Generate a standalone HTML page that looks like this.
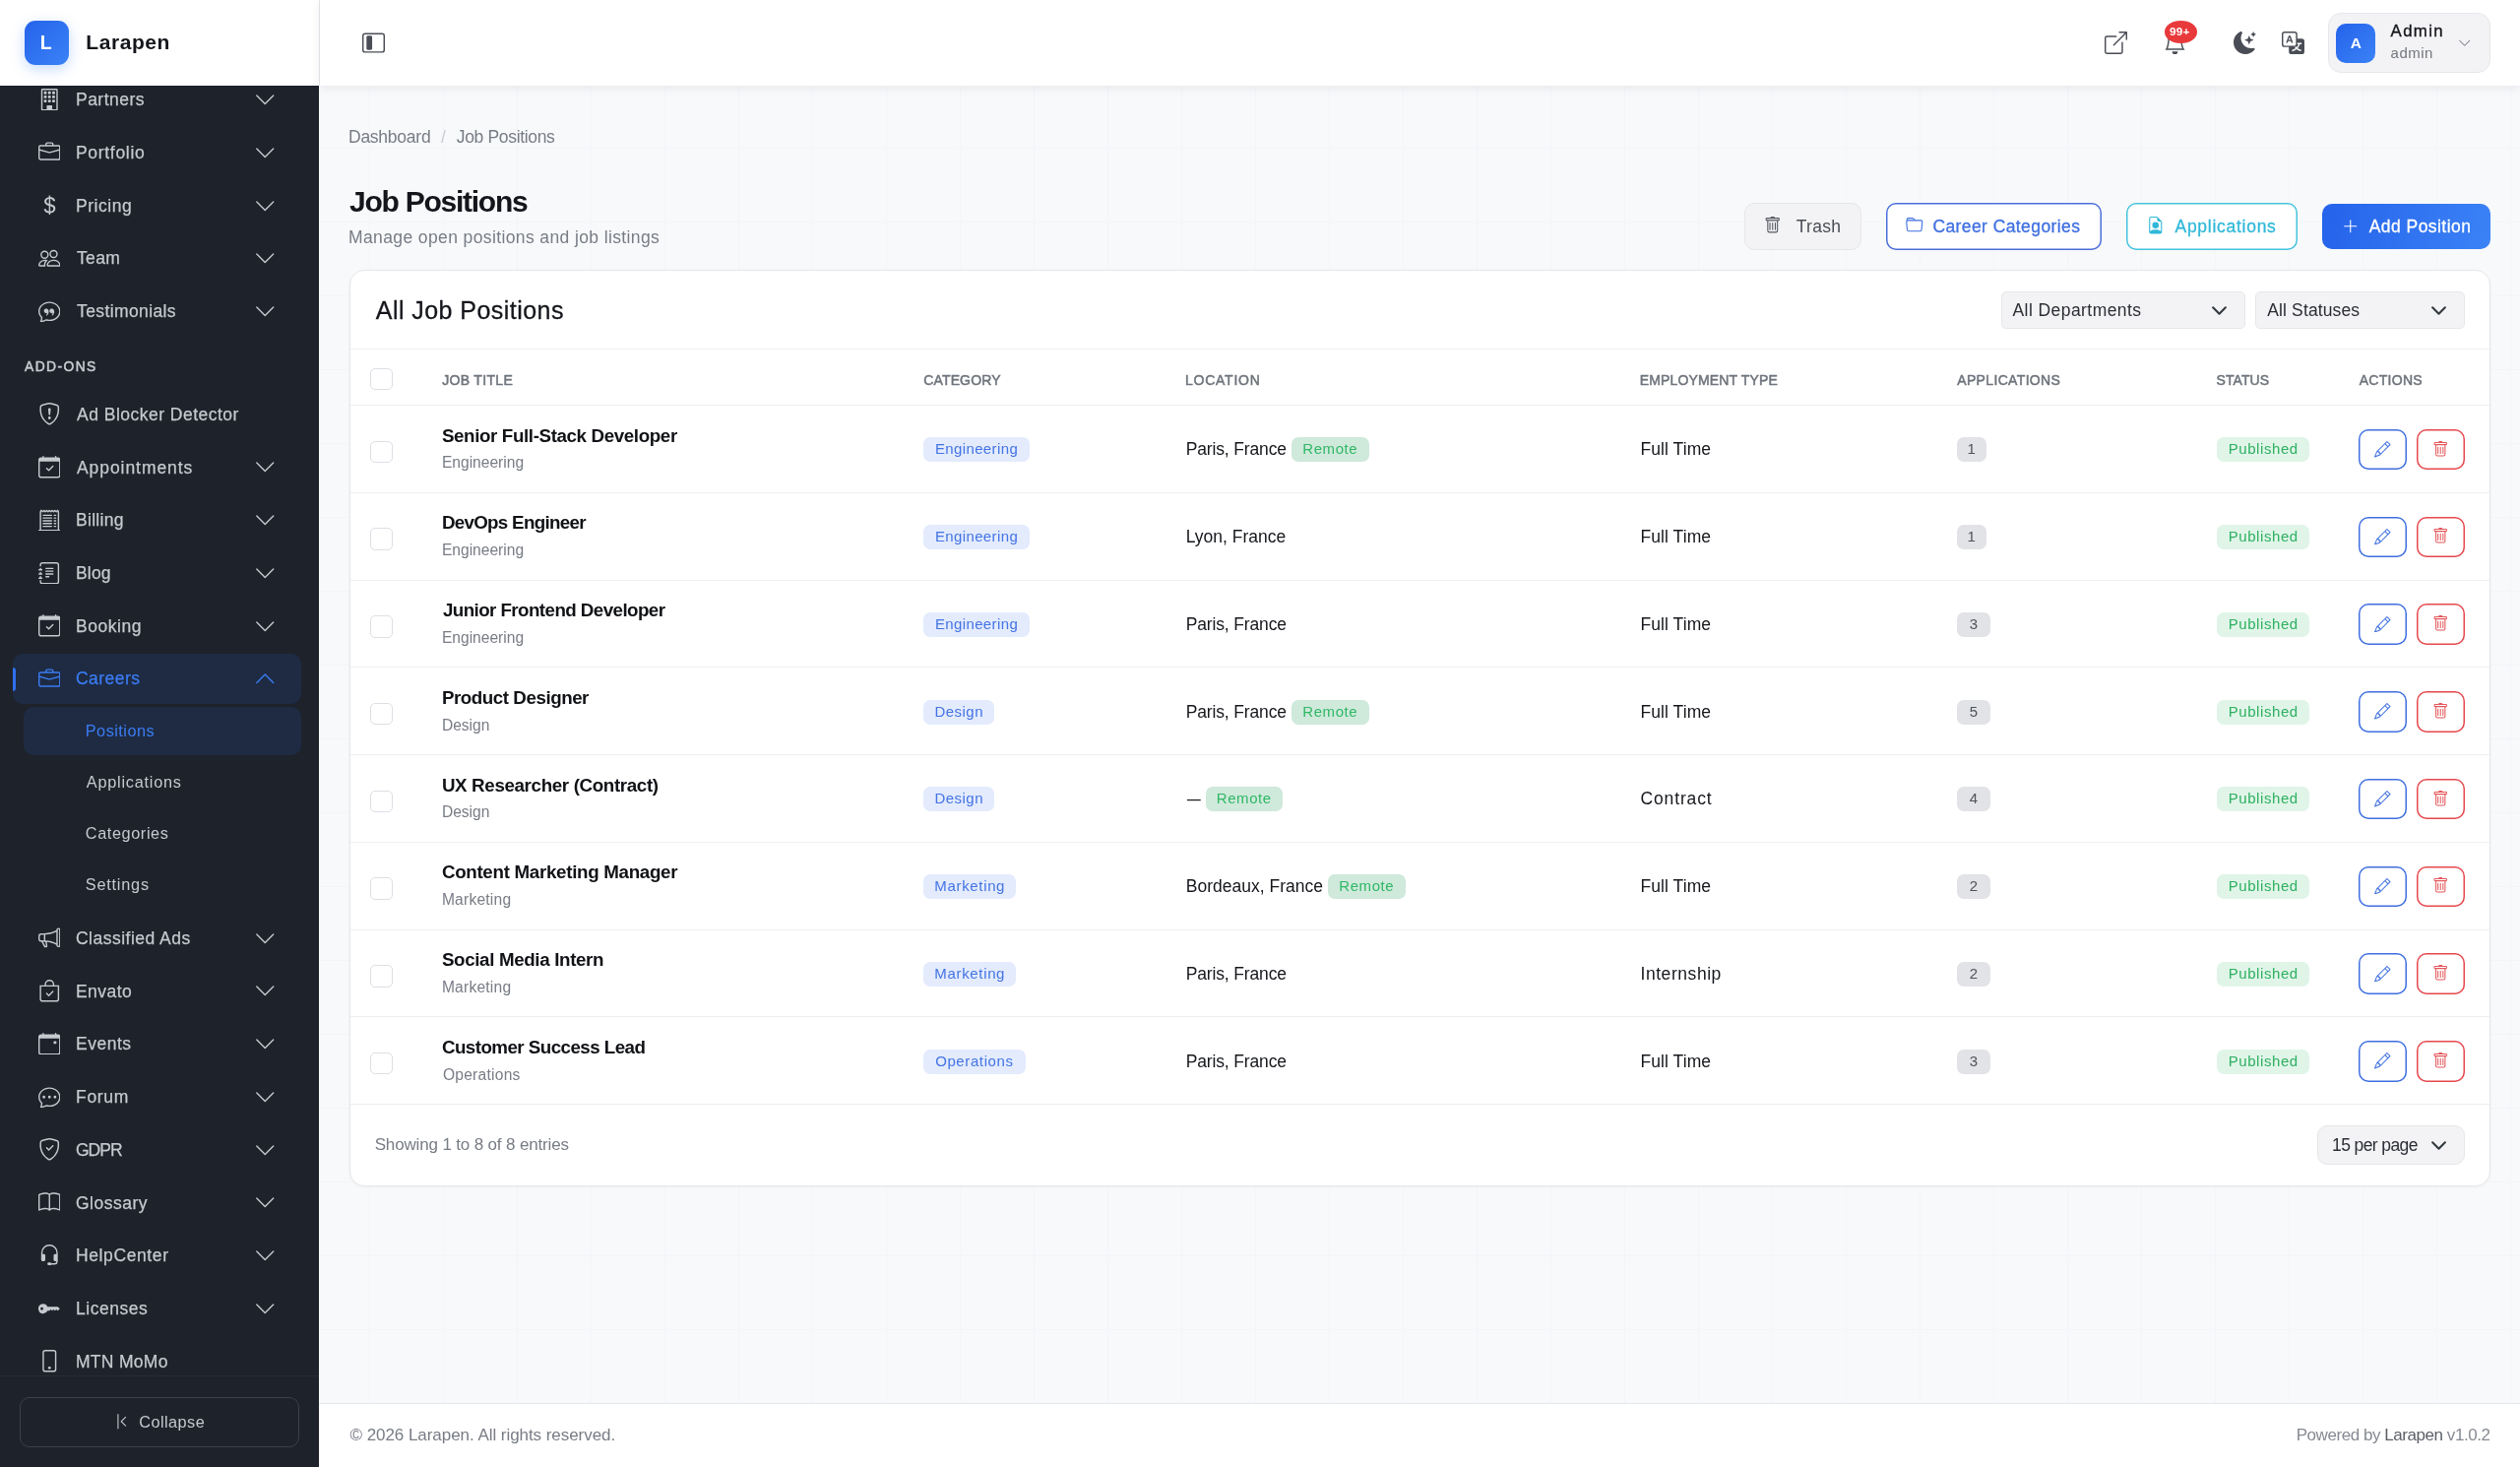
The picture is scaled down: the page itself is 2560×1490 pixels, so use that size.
<!DOCTYPE html><html lang="en"><head><meta charset="utf-8"><title>Job Positions - Larapen</title><style>
*{box-sizing:border-box}
html,body{margin:0;padding:0}
body{width:2560px;height:1490px;overflow:hidden;position:relative;font-family:"Liberation Sans",Arial,sans-serif;color:#15171c;
 background-color:#f8f9fb;
 background-image:linear-gradient(to right,#f4f5f8 1px,transparent 1px),linear-gradient(to bottom,#f4f5f8 1px,transparent 1px);
 background-size:75px 75px;background-position:0 0}
#app{position:absolute;left:0;top:0;width:2560px;height:1490px;will-change:transform}
.t{position:absolute;white-space:nowrap}
.i{position:absolute;display:block}
.abs{position:absolute}
#sidebar{position:absolute;left:0;top:0;width:324px;height:1490px;background:#1e222b;overflow:hidden;color:#c6c9ce}
#brand{position:absolute;left:0;top:0;width:325px;height:87px;background:#fff;border-right:1px solid #e6e8ec}
#topbar{position:absolute;left:325px;top:0;width:2235px;height:87px;background:#fff;box-shadow:0 2px 10px rgba(20,25,40,.08)}
#footer{position:absolute;left:324px;top:1425px;width:2236px;height:65px;background:#fff;border-top:1px solid #e6e8ec}
#card{position:absolute;left:355px;top:274px;width:2175px;height:931px;background:#fff;border:1px solid #e4e6ea;border-radius:15px;box-shadow:0 1px 3px rgba(20,25,40,.04)}
.hr{position:absolute;left:356px;width:2173px;height:1px;background:#eeeff2}
.logo{position:absolute;left:25px;top:21px;width:45px;height:45px;border-radius:11px;background:linear-gradient(135deg,#2563eb,#3b82f6);box-shadow:0 4px 14px rgba(59,130,246,.28)}
.cb{position:absolute;width:22.5px;height:22.5px;border:1px solid #dcdfe4;border-radius:5px;background:#fff}
.bd{position:absolute;height:25px;border-radius:7px;font-size:15px;line-height:24px;padding:0;text-align:center}
.b-blue{background:#e3ebfd;color:#4474e3}
.b-green{background:#cfe9db;color:#30b866}
.b-pub{background:#e0f5e8;color:#2fb062}
.b-gray{background:#e2e3e6;color:#4f535a}
.btn{position:absolute;border-radius:10px}
.act{position:absolute;width:49px;height:41.5px;border-radius:10px;background:#fff}
.act.e{box-shadow:inset 0 0 0 1.5px #3f6fe0}
.act.d{box-shadow:inset 0 0 0 1.5px #e5484d}
.sel{position:absolute;background:#f3f3f5;border:1px solid #e6e7ea;border-radius:5px}
</style></head><body><div id="app">
<aside id="sidebar">
<svg class="i" style="left:38.75px;top:89.65px;width:22.5px;height:22.5px;" viewBox="0 0 16 16" fill="currentColor"><path d="M4 2.500a.5.5 0 0 1 .5-.5h1a.5.5 0 0 1 .5.5v1a.5.5 0 0 1-.5.5h-1a.5.5 0 0 1-.5-.5zm3 0a.5.5 0 0 1 .5-.5h1a.5.5 0 0 1 .5.5v1a.5.5 0 0 1-.5.5h-1a.5.5 0 0 1-.5-.5zm3.500-.5a.5.5 0 0 0-.5.5v1a.5.5 0 0 0 .5.5h1a.5.5 0 0 0 .5-.5v-1a.5.5 0 0 0-.5-.5zM4 5.500a.5.5 0 0 1 .5-.5h1a.5.5 0 0 1 .5.5v1a.5.5 0 0 1-.5.5h-1a.5.5 0 0 1-.5-.5zM7.500 5a.5.5 0 0 0-.5.5v1a.5.5 0 0 0 .5.5h1a.5.5 0 0 0 .5-.5v-1a.5.5 0 0 0-.5-.5zm2.500.5a.5.5 0 0 1 .5-.5h1a.5.5 0 0 1 .5.5v1a.5.5 0 0 1-.5.5h-1a.5.5 0 0 1-.5-.5zM4.500 8a.5.5 0 0 0-.5.5v1a.5.5 0 0 0 .5.5h1a.5.5 0 0 0 .5-.5v-1a.5.5 0 0 0-.5-.5zm2.500.5a.5.5 0 0 1 .5-.5h1a.5.5 0 0 1 .5.5v1a.5.5 0 0 1-.5.5h-1a.5.5 0 0 1-.5-.5zm3.500-.5a.5.5 0 0 0-.5.5v1a.5.5 0 0 0 .5.5h1a.5.5 0 0 0 .5-.5v-1a.5.5 0 0 0-.5-.5z"/><path d="M2 1a1 1 0 0 1 1-1h10a1 1 0 0 1 1 1v14a1 1 0 0 1-1 1H3a1 1 0 0 1-1-1zm11 0H3v14h3v-2.500a.5.5 0 0 1 .5-.5h3a.5.5 0 0 1 .5.5V15h3z"/></svg>
<span class="t" style="left:77.00px;top:91.24px;font-size:17.5px;line-height:21.0px;letter-spacing:0.471px;-webkit-text-stroke:0.25px #c6c9ce;">Partners</span>
<svg class="i" style="left:257.50px;top:90.05px;width:22.5px;height:22.5px;" viewBox="0 0 16 16" fill="currentColor"><path fill-rule="evenodd" d="M1.646 4.646a.5.5 0 0 1 .708 0L8 10.293l5.646-5.647a.5.5 0 0 1 .708.708l-6 6a.5.5 0 0 1-.708 0l-6-6a.5.5 0 0 1 0-.708"/></svg>
<svg class="i" style="left:38.75px;top:143.40px;width:22.5px;height:22.5px;" viewBox="0 0 16 16" fill="currentColor"><path d="M6.5 1A1.5 1.5 0 0 0 5 2.5V3H1.5A1.5 1.5 0 0 0 0 4.5v8A1.5 1.5 0 0 0 1.5 14h13a1.5 1.5 0 0 0 1.5-1.5v-8A1.5 1.5 0 0 0 14.5 3H11v-.5A1.5 1.5 0 0 0 9.5 1zm0 1h3a.5.5 0 0 1 .5.5V3H6v-.5a.5.5 0 0 1 .5-.5m1.886 6.914L15 7.151V12.500a.5.5 0 0 1-.5.5h-13a.5.5 0 0 1-.5-.5V7.150l6.614 1.764a1.500 1.500 0 0 0 .772 0M1.500 4h13a.5.5 0 0 1 .5.5v1.616L8.129 7.948a.5.5 0 0 1-.258 0L1 6.116V4.500a.5.5 0 0 1 .5-.5"/></svg>
<span class="t" style="left:77.00px;top:144.99px;font-size:17.5px;line-height:21.0px;letter-spacing:0.688px;-webkit-text-stroke:0.25px #c6c9ce;">Portfolio</span>
<svg class="i" style="left:257.50px;top:143.80px;width:22.5px;height:22.5px;" viewBox="0 0 16 16" fill="currentColor"><path fill-rule="evenodd" d="M1.646 4.646a.5.5 0 0 1 .708 0L8 10.293l5.646-5.647a.5.5 0 0 1 .708.708l-6 6a.5.5 0 0 1-.708 0l-6-6a.5.5 0 0 1 0-.708"/></svg>
<svg class="i" style="left:38.75px;top:197.15px;width:22.5px;height:22.5px;" viewBox="0 0 16 16" fill="currentColor"><path d="M4 10.781c.148 1.667 1.513 2.850 3.591 3.003V15h1.043v-1.216c2.270-.179 3.678-1.438 3.678-3.300 0-1.590-.947-2.510-2.956-3.028l-.722-.187V3.467c1.122.110 1.879.714 2.070 1.616h1.470c-.166-1.600-1.540-2.748-3.540-2.875V1H7.591v1.233c-1.939.230-3.270 1.472-3.270 3.156 0 1.454.966 2.483 2.661 2.917l.610.162v4.031c-1.149-.170-1.940-.800-2.131-1.718zm3.391-3.836c-1.043-.263-1.600-.825-1.600-1.616 0-.944.704-1.641 1.800-1.828v3.495l-.200-.050zm1.591 1.872c1.287.323 1.852.859 1.852 1.769 0 1.097-.826 1.828-2.200 1.939V8.730z"/></svg>
<span class="t" style="left:77.00px;top:198.74px;font-size:17.5px;line-height:21.0px;letter-spacing:0.55px;-webkit-text-stroke:0.25px #c6c9ce;">Pricing</span>
<svg class="i" style="left:257.50px;top:197.55px;width:22.5px;height:22.5px;" viewBox="0 0 16 16" fill="currentColor"><path fill-rule="evenodd" d="M1.646 4.646a.5.5 0 0 1 .708 0L8 10.293l5.646-5.647a.5.5 0 0 1 .708.708l-6 6a.5.5 0 0 1-.708 0l-6-6a.5.5 0 0 1 0-.708"/></svg>
<svg class="i" style="left:38.75px;top:250.90px;width:22.5px;height:22.5px;" viewBox="0 0 16 16" fill="currentColor"><path d="M15 14s1 0 1-1-1-4-5-4-5 3-5 4 1 1 1 1zm-7.978-1L7 12.996c.001-.264.167-1.030.760-1.720C8.312 10.629 9.282 10 11 10c1.717 0 2.687.630 3.240 1.276.593.690.758 1.457.760 1.720l-.008.002-.014.002zM11 7a2 2 0 1 0 0-4 2 2 0 0 0 0 4m3-2a3 3 0 1 1-6 0 3 3 0 0 1 6 0M6.936 9.280a6 6 0 0 0-1.230-.247A7 7 0 0 0 5 9c-4 0-5 3-5 4q0 1 1 1h4.216A2.240 2.240 0 0 1 5 13c0-1.010.377-2.042 1.090-2.904.243-.294.526-.569.846-.816M4.920 10A5.500 5.500 0 0 0 4 13H1c0-.260.164-1.030.760-1.724.545-.636 1.492-1.256 3.160-1.275ZM1.500 5.500a3 3 0 1 1 6 0 3 3 0 0 1-6 0m3-2a2 2 0 1 0 0 4 2 2 0 0 0 0-4"/></svg>
<span class="t" style="left:78.00px;top:252.49px;font-size:17.5px;line-height:21.0px;letter-spacing:0.333px;-webkit-text-stroke:0.25px #c6c9ce;">Team</span>
<svg class="i" style="left:257.50px;top:251.30px;width:22.5px;height:22.5px;" viewBox="0 0 16 16" fill="currentColor"><path fill-rule="evenodd" d="M1.646 4.646a.5.5 0 0 1 .708 0L8 10.293l5.646-5.647a.5.5 0 0 1 .708.708l-6 6a.5.5 0 0 1-.708 0l-6-6a.5.5 0 0 1 0-.708"/></svg>
<svg class="i" style="left:38.75px;top:304.65px;width:22.5px;height:22.5px;" viewBox="0 0 16 16" fill="currentColor"><path d="M2.678 11.894a1 1 0 0 1 .287.801 11 11 0 0 1-.398 2c1.395-.323 2.247-.697 2.634-.893a1 1 0 0 1 .710-.074A8 8 0 0 0 8 14c3.996 0 7-2.807 7-6s-3.004-6-7-6-7 2.808-7 6c0 1.468.617 2.830 1.678 3.894m-.493 3.905a22 22 0 0 1-.713.129c-.200.032-.352-.176-.273-.362a10 10 0 0 0 .244-.637l.003-.010c.248-.720.450-1.548.524-2.319C.743 11.370 0 9.760 0 8c0-3.866 3.582-7 8-7s8 3.134 8 7-3.582 7-8 7a9 9 0 0 1-2.347-.306c-.520.263-1.639.742-3.468 1.105"/><path d="M7.066 6.760A1.665 1.665 0 0 0 4 7.668a1.667 1.667 0 0 0 2.561 1.406c-.131.389-.375.804-.777 1.220a.417.417 0 0 0 .600.580c1.486-1.540 1.293-3.214.682-4.112zm4 0A1.665 1.665 0 0 0 8 7.668a1.667 1.667 0 0 0 2.561 1.406c-.131.389-.375.804-.777 1.220a.417.417 0 0 0 .600.580c1.486-1.540 1.293-3.214.682-4.112z"/></svg>
<span class="t" style="left:78.00px;top:306.24px;font-size:17.5px;line-height:21.0px;letter-spacing:0.391px;-webkit-text-stroke:0.25px #c6c9ce;">Testimonials</span>
<svg class="i" style="left:257.50px;top:305.05px;width:22.5px;height:22.5px;" viewBox="0 0 16 16" fill="currentColor"><path fill-rule="evenodd" d="M1.646 4.646a.5.5 0 0 1 .708 0L8 10.293l5.646-5.647a.5.5 0 0 1 .708.708l-6 6a.5.5 0 0 1-.708 0l-6-6a.5.5 0 0 1 0-.708"/></svg>
<span class="t" style="left:25.00px;top:365.04px;font-size:13.8px;line-height:16.56px;color:#c9ccd2;letter-spacing:1.45px;-webkit-text-stroke:0.5px #c9ccd2;">ADD-ONS</span>
<svg class="i" style="left:38.75px;top:409.25px;width:22.5px;height:22.5px;" viewBox="0 0 16 16" fill="currentColor"><path d="M5.338 1.590a61 61 0 0 0-2.837.856.480.480 0 0 0-.328.390c-.554 4.157.726 7.190 2.253 9.188a10.700 10.700 0 0 0 2.287 2.233c.346.244.652.420.893.533q.180.085.293.118a1 1 0 0 0 .101.025 1 1 0 0 0 .100-.025q.114-.034.294-.118c.240-.113.547-.290.893-.533a10.700 10.700 0 0 0 2.287-2.233c1.527-1.997 2.807-5.031 2.253-9.188a.480.480 0 0 0-.328-.390c-.651-.213-1.750-.560-2.837-.855C9.552 1.290 8.531 1.067 8 1.067c-.530 0-1.552.223-2.662.524zM5.072.560C6.157.265 7.310 0 8 0s1.843.265 2.928.560c1.110.300 2.229.655 2.887.870a1.540 1.540 0 0 1 1.044 1.262c.596 4.477-.787 7.795-2.465 9.990a11.800 11.800 0 0 1-2.517 2.453 7 7 0 0 1-1.048.625c-.280.132-.581.240-.829.240s-.548-.108-.829-.240a7 7 0 0 1-1.048-.625 11.800 11.800 0 0 1-2.517-2.453C1.928 10.487.545 7.169 1.141 2.692A1.540 1.540 0 0 1 2.185 1.430 63 63 0 0 1 5.072.560"/><path d="M7.001 11a1 1 0 1 1 2 0 1 1 0 0 1-2 0M7.100 4.995a.905.905 0 1 1 1.800 0l-.350 3.507a.553.553 0 0 1-1.100 0z"/></svg>
<span class="t" style="left:78.00px;top:410.84px;font-size:17.5px;line-height:21.0px;letter-spacing:0.489px;-webkit-text-stroke:0.25px #c6c9ce;">Ad Blocker Detector</span>
<svg class="i" style="left:38.75px;top:463.00px;width:22.5px;height:22.5px;" viewBox="0 0 16 16" fill="currentColor"><path d="M10.854 7.146a.5.5 0 0 1 0 .708l-3 3a.5.5 0 0 1-.708 0l-1.500-1.500a.5.5 0 1 1 .708-.708L7.500 9.793l2.646-2.647a.5.5 0 0 1 .708 0"/><path d="M3.500 0a.5.5 0 0 1 .5.5V1h8V.5a.5.5 0 0 1 1 0V1h1a2 2 0 0 1 2 2v11a2 2 0 0 1-2 2H2a2 2 0 0 1-2-2V3a2 2 0 0 1 2-2h1V.5a.5.5 0 0 1 .5-.5M1 4v10a1 1 0 0 0 1 1h12a1 1 0 0 0 1-1V4z"/></svg>
<span class="t" style="left:78.00px;top:464.59px;font-size:17.5px;line-height:21.0px;letter-spacing:0.936px;-webkit-text-stroke:0.25px #c6c9ce;">Appointments</span>
<svg class="i" style="left:257.50px;top:463.40px;width:22.5px;height:22.5px;" viewBox="0 0 16 16" fill="currentColor"><path fill-rule="evenodd" d="M1.646 4.646a.5.5 0 0 1 .708 0L8 10.293l5.646-5.647a.5.5 0 0 1 .708.708l-6 6a.5.5 0 0 1-.708 0l-6-6a.5.5 0 0 1 0-.708"/></svg>
<svg class="i" style="left:38.75px;top:516.75px;width:22.5px;height:22.5px;" viewBox="0 0 16 16" fill="currentColor"><path d="M3 4.500a.5.5 0 0 1 .5-.5h6a.5.5 0 1 1 0 1h-6a.5.5 0 0 1-.5-.5m0 2a.5.5 0 0 1 .5-.5h6a.5.5 0 1 1 0 1h-6a.5.5 0 0 1-.5-.5m0 2a.5.5 0 0 1 .5-.5h6a.5.5 0 1 1 0 1h-6a.5.5 0 0 1-.5-.5m0 2a.5.5 0 0 1 .5-.5h6a.5.5 0 0 1 0 1h-6a.5.5 0 0 1-.5-.5m0 2a.5.5 0 0 1 .5-.5h6a.5.5 0 0 1 0 1h-6a.5.5 0 0 1-.5-.5M11.500 4a.5.5 0 0 0 0 1h1a.5.5 0 0 0 0-1zm0 2a.5.5 0 0 0 0 1h1a.5.5 0 0 0 0-1zm0 2a.5.5 0 0 0 0 1h1a.5.5 0 0 0 0-1zm0 2a.5.5 0 0 0 0 1h1a.5.5 0 0 0 0-1zm0 2a.5.5 0 0 0 0 1h1a.5.5 0 0 0 0-1z"/><path d="M2.354.646a.5.5 0 0 0-.801.130l-.5 1A.5.5 0 0 0 1 2v13H.5a.5.5 0 0 0 0 1h15a.5.5 0 0 0 0-1H15V2a.5.5 0 0 0-.053-.224l-.5-1a.5.5 0 0 0-.800-.130L13 1.293l-.646-.647a.5.5 0 0 0-.708 0L11 1.293l-.646-.647a.5.5 0 0 0-.708 0L9 1.293 8.354.646a.5.5 0 0 0-.708 0L7 1.293 6.354.646a.5.5 0 0 0-.708 0L5 1.293 4.354.646a.5.5 0 0 0-.708 0L3 1.293zm-.217 1.198.510.510a.5.5 0 0 0 .707 0L4 1.707l.646.647a.5.5 0 0 0 .708 0L6 1.707l.646.647a.5.5 0 0 0 .708 0L8 1.707l.646.647a.5.5 0 0 0 .708 0L10 1.707l.646.647a.5.5 0 0 0 .708 0L12 1.707l.646.647a.5.5 0 0 0 .708 0l.509-.510.137.274V15H2V2.118z"/></svg>
<span class="t" style="left:77.00px;top:518.34px;font-size:17.5px;line-height:21.0px;letter-spacing:0.3px;-webkit-text-stroke:0.25px #c6c9ce;">Billing</span>
<svg class="i" style="left:257.50px;top:517.15px;width:22.5px;height:22.5px;" viewBox="0 0 16 16" fill="currentColor"><path fill-rule="evenodd" d="M1.646 4.646a.5.5 0 0 1 .708 0L8 10.293l5.646-5.647a.5.5 0 0 1 .708.708l-6 6a.5.5 0 0 1-.708 0l-6-6a.5.5 0 0 1 0-.708"/></svg>
<svg class="i" style="left:38.75px;top:570.50px;width:22.5px;height:22.5px;" viewBox="0 0 16 16" fill="currentColor"><path d="M5 10.500a.5.5 0 0 1 .5-.5h2a.5.5 0 0 1 0 1h-2a.5.5 0 0 1-.5-.5m0-2a.5.5 0 0 1 .5-.5h5a.5.5 0 0 1 0 1h-5a.5.5 0 0 1-.5-.5m0-2a.5.5 0 0 1 .5-.5h5a.5.5 0 0 1 0 1h-5a.5.5 0 0 1-.5-.5m0-2a.5.5 0 0 1 .5-.5h5a.5.5 0 0 1 0 1h-5a.5.5 0 0 1-.5-.5"/><path d="M3 0h10a2 2 0 0 1 2 2v12a2 2 0 0 1-2 2H3a2 2 0 0 1-2-2v-1h1v1a1 1 0 0 0 1 1h10a1 1 0 0 0 1-1V2a1 1 0 0 0-1-1H3a1 1 0 0 0-1 1v1H1V2a2 2 0 0 1 2-2"/><path d="M1 5v-.5a.5.5 0 0 1 1 0V5h.5a.5.5 0 0 1 0 1h-2a.5.5 0 0 1 0-1zm0 3v-.5a.5.5 0 0 1 1 0V8h.5a.5.5 0 0 1 0 1h-2a.5.5 0 0 1 0-1zm0 3v-.5a.5.5 0 0 1 1 0v.5h.5a.5.5 0 0 1 0 1h-2a.5.5 0 0 1 0-1z"/></svg>
<span class="t" style="left:77.00px;top:572.09px;font-size:17.5px;line-height:21.0px;letter-spacing:0.167px;-webkit-text-stroke:0.25px #c6c9ce;">Blog</span>
<svg class="i" style="left:257.50px;top:570.90px;width:22.5px;height:22.5px;" viewBox="0 0 16 16" fill="currentColor"><path fill-rule="evenodd" d="M1.646 4.646a.5.5 0 0 1 .708 0L8 10.293l5.646-5.647a.5.5 0 0 1 .708.708l-6 6a.5.5 0 0 1-.708 0l-6-6a.5.5 0 0 1 0-.708"/></svg>
<svg class="i" style="left:38.75px;top:624.25px;width:22.5px;height:22.5px;" viewBox="0 0 16 16" fill="currentColor"><path d="M10.854 7.146a.5.5 0 0 1 0 .708l-3 3a.5.5 0 0 1-.708 0l-1.500-1.500a.5.5 0 1 1 .708-.708L7.500 9.793l2.646-2.647a.5.5 0 0 1 .708 0"/><path d="M3.500 0a.5.5 0 0 1 .5.5V1h8V.5a.5.5 0 0 1 1 0V1h1a2 2 0 0 1 2 2v11a2 2 0 0 1-2 2H2a2 2 0 0 1-2-2V3a2 2 0 0 1 2-2h1V.5a.5.5 0 0 1 .5-.5M1 4v10a1 1 0 0 0 1 1h12a1 1 0 0 0 1-1V4z"/></svg>
<span class="t" style="left:77.00px;top:625.84px;font-size:17.5px;line-height:21.0px;letter-spacing:0.55px;-webkit-text-stroke:0.25px #c6c9ce;">Booking</span>
<svg class="i" style="left:257.50px;top:624.65px;width:22.5px;height:22.5px;" viewBox="0 0 16 16" fill="currentColor"><path fill-rule="evenodd" d="M1.646 4.646a.5.5 0 0 1 .708 0L8 10.293l5.646-5.647a.5.5 0 0 1 .708.708l-6 6a.5.5 0 0 1-.708 0l-6-6a.5.5 0 0 1 0-.708"/></svg>
<div class="abs" style="left:12.5px;top:664px;width:293.5px;height:50.5px;border-radius:10px;background:#1e2b43"></div>
<div class="abs" style="left:12.5px;top:677.5px;width:3.75px;height:24px;border-radius:0 4px 4px 0;background:#2f6fed"></div>
<svg class="i" style="left:38.75px;top:677.85px;width:22.5px;height:22.5px;color:#3b7cf3;" viewBox="0 0 16 16" fill="currentColor"><path d="M6.5 1A1.5 1.5 0 0 0 5 2.5V3H1.5A1.5 1.5 0 0 0 0 4.5v8A1.5 1.5 0 0 0 1.5 14h13a1.5 1.5 0 0 0 1.5-1.5v-8A1.5 1.5 0 0 0 14.5 3H11v-.5A1.5 1.5 0 0 0 9.5 1zm0 1h3a.5.5 0 0 1 .5.5V3H6v-.5a.5.5 0 0 1 .5-.5m1.886 6.914L15 7.151V12.500a.5.5 0 0 1-.5.5h-13a.5.5 0 0 1-.5-.5V7.150l6.614 1.764a1.500 1.500 0 0 0 .772 0M1.500 4h13a.5.5 0 0 1 .5.5v1.616L8.129 7.948a.5.5 0 0 1-.258 0L1 6.116V4.500a.5.5 0 0 1 .5-.5"/></svg>
<span class="t" style="left:77.00px;top:679.44px;font-size:17.5px;line-height:21.0px;color:#3b7cf3;letter-spacing:0.45px;-webkit-text-stroke:0.25px #3b7cf3;">Careers</span>
<svg class="i" style="left:257.50px;top:678.25px;width:22.5px;height:22.5px;color:#3b7cf3;" viewBox="0 0 16 16" fill="currentColor"><path fill-rule="evenodd" d="M7.646 4.646a.5.5 0 0 1 .708 0l6 6a.5.5 0 0 1-.708.708L8 5.707l-5.646 5.647a.5.5 0 0 1-.708-.708z"/></svg>
<div class="abs" style="left:23.5px;top:718px;width:282.5px;height:48.5px;border-radius:10px;background:#1e2b43"></div>
<span class="t" style="left:86.80px;top:733.22px;font-size:16.25px;line-height:19.5px;color:#3b7cf3;letter-spacing:0.488px;">Positions</span>
<span class="t" style="left:87.80px;top:785.22px;font-size:16.25px;line-height:19.5px;color:#c6c9ce;letter-spacing:0.773px;">Applications</span>
<span class="t" style="left:86.80px;top:837.02px;font-size:16.25px;line-height:19.5px;color:#c6c9ce;letter-spacing:0.611px;">Categories</span>
<span class="t" style="left:86.80px;top:888.82px;font-size:16.25px;line-height:19.5px;color:#c6c9ce;letter-spacing:0.786px;">Settings</span>
<svg class="i" style="left:38.75px;top:941.25px;width:22.5px;height:22.5px;" viewBox="0 0 16 16" fill="currentColor"><path d="M13 2.500a1.500 1.500 0 0 1 3 0v11a1.500 1.500 0 0 1-3 0v-.214c-2.162-1.241-4.490-1.843-6.912-2.083l.405 2.712A1 1 0 0 1 5.510 15.100h-.548a1 1 0 0 1-.916-.599l-1.850-3.490-.202-.003A2.014 2.014 0 0 1 0 9V7a2.020 2.020 0 0 1 1.992-2.013 75 75 0 0 0 2.483-.075c3.043-.154 6.148-.849 8.525-2.199zm1 0v11a.5.5 0 0 0 1 0v-11a.5.5 0 0 0-1 0m-1 1.350c-2.344 1.205-5.209 1.842-8 2.033v4.233q.270.015.537.036c2.568.189 5.093.744 7.463 1.993zm-9 6.215v-4.130a95 95 0 0 1-1.992.052A1.020 1.020 0 0 0 1 7v2c0 .550.448 1.002 1.006 1.009A61 61 0 0 1 4 10.065m-.657.975 1.609 3.037.010.024h.548l-.002-.014-.443-2.966a68 68 0 0 0-1.722-.082z"/></svg>
<span class="t" style="left:77.00px;top:942.84px;font-size:17.5px;line-height:21.0px;letter-spacing:0.485px;-webkit-text-stroke:0.25px #c6c9ce;">Classified Ads</span>
<svg class="i" style="left:257.50px;top:941.65px;width:22.5px;height:22.5px;" viewBox="0 0 16 16" fill="currentColor"><path fill-rule="evenodd" d="M1.646 4.646a.5.5 0 0 1 .708 0L8 10.293l5.646-5.647a.5.5 0 0 1 .708.708l-6 6a.5.5 0 0 1-.708 0l-6-6a.5.5 0 0 1 0-.708"/></svg>
<svg class="i" style="left:38.75px;top:995.00px;width:22.5px;height:22.5px;" viewBox="0 0 16 16" fill="currentColor"><path fill-rule="evenodd" d="M10.854 8.146a.5.5 0 0 1 0 .708l-3 3a.5.5 0 0 1-.708 0l-1.500-1.500a.5.5 0 0 1 .708-.708L7.500 10.793l2.646-2.647a.5.5 0 0 1 .708 0"/><path d="M8 1a2.500 2.500 0 0 1 2.500 2.500V4h-5v-.5A2.500 2.500 0 0 1 8 1m3.500 3v-.5a3.500 3.500 0 1 0-7 0V4H1v10a2 2 0 0 0 2 2h10a2 2 0 0 0 2-2V4zM2 5h12v9a1 1 0 0 1-1 1H3a1 1 0 0 1-1-1z"/></svg>
<span class="t" style="left:77.00px;top:996.59px;font-size:17.5px;line-height:21.0px;letter-spacing:0.44px;-webkit-text-stroke:0.25px #c6c9ce;">Envato</span>
<svg class="i" style="left:257.50px;top:995.40px;width:22.5px;height:22.5px;" viewBox="0 0 16 16" fill="currentColor"><path fill-rule="evenodd" d="M1.646 4.646a.5.5 0 0 1 .708 0L8 10.293l5.646-5.647a.5.5 0 0 1 .708.708l-6 6a.5.5 0 0 1-.708 0l-6-6a.5.5 0 0 1 0-.708"/></svg>
<svg class="i" style="left:38.75px;top:1048.75px;width:22.5px;height:22.5px;" viewBox="0 0 16 16" fill="currentColor"><path d="M11 6.500a.5.5 0 0 1 .5-.5h1a.5.5 0 0 1 .5.5v1a.5.5 0 0 1-.5.5h-1a.5.5 0 0 1-.5-.5z"/><path d="M3.500 0a.5.5 0 0 1 .5.5V1h8V.5a.5.5 0 0 1 1 0V1h1a2 2 0 0 1 2 2v11a2 2 0 0 1-2 2H2a2 2 0 0 1-2-2V3a2 2 0 0 1 2-2h1V.5a.5.5 0 0 1 .5-.5M1 4v10a1 1 0 0 0 1 1h12a1 1 0 0 0 1-1V4z"/></svg>
<span class="t" style="left:77.00px;top:1050.34px;font-size:17.5px;line-height:21.0px;letter-spacing:0.5px;-webkit-text-stroke:0.25px #c6c9ce;">Events</span>
<svg class="i" style="left:257.50px;top:1049.15px;width:22.5px;height:22.5px;" viewBox="0 0 16 16" fill="currentColor"><path fill-rule="evenodd" d="M1.646 4.646a.5.5 0 0 1 .708 0L8 10.293l5.646-5.647a.5.5 0 0 1 .708.708l-6 6a.5.5 0 0 1-.708 0l-6-6a.5.5 0 0 1 0-.708"/></svg>
<svg class="i" style="left:38.75px;top:1102.50px;width:22.5px;height:22.5px;" viewBox="0 0 16 16" fill="currentColor"><path d="M5 8a1 1 0 1 1-2 0 1 1 0 0 1 2 0m4 0a1 1 0 1 1-2 0 1 1 0 0 1 2 0m3 1a1 1 0 1 0 0-2 1 1 0 0 0 0 2"/><path d="m2.165 15.803.020-.004c1.830-.363 2.948-.842 3.468-1.105A9 9 0 0 0 8 15c4.418 0 8-3.134 8-7s-3.582-7-8-7-8 3.134-8 7c0 1.760.743 3.370 1.970 4.600a10.400 10.400 0 0 1-.524 2.318l-.003.011a11 11 0 0 1-.244.637c-.079.186.074.394.273.362a22 22 0 0 0 .693-.125m.800-3.108a1 1 0 0 0-.287-.801C1.618 10.830 1 9.468 1 8c0-3.192 3.004-6 7-6s7 2.808 7 6-3.004 6-7 6a8 8 0 0 1-2.088-.272 1 1 0 0 0-.711.074c-.387.196-1.240.570-2.634.893a11 11 0 0 0 .398-2"/></svg>
<span class="t" style="left:77.00px;top:1104.09px;font-size:17.5px;line-height:21.0px;letter-spacing:0.7px;-webkit-text-stroke:0.25px #c6c9ce;">Forum</span>
<svg class="i" style="left:257.50px;top:1102.90px;width:22.5px;height:22.5px;" viewBox="0 0 16 16" fill="currentColor"><path fill-rule="evenodd" d="M1.646 4.646a.5.5 0 0 1 .708 0L8 10.293l5.646-5.647a.5.5 0 0 1 .708.708l-6 6a.5.5 0 0 1-.708 0l-6-6a.5.5 0 0 1 0-.708"/></svg>
<svg class="i" style="left:38.75px;top:1156.25px;width:22.5px;height:22.5px;" viewBox="0 0 16 16" fill="currentColor"><path d="M5.338 1.590a61 61 0 0 0-2.837.856.480.480 0 0 0-.328.390c-.554 4.157.726 7.190 2.253 9.188a10.700 10.700 0 0 0 2.287 2.233c.346.244.652.420.893.533q.180.085.293.118a1 1 0 0 0 .101.025 1 1 0 0 0 .100-.025q.114-.034.294-.118c.240-.113.547-.290.893-.533a10.700 10.700 0 0 0 2.287-2.233c1.527-1.997 2.807-5.031 2.253-9.188a.480.480 0 0 0-.328-.390c-.651-.213-1.750-.560-2.837-.855C9.552 1.290 8.531 1.067 8 1.067c-.530 0-1.552.223-2.662.524zM5.072.560C6.157.265 7.310 0 8 0s1.843.265 2.928.560c1.110.300 2.229.655 2.887.870a1.540 1.540 0 0 1 1.044 1.262c.596 4.477-.787 7.795-2.465 9.990a11.800 11.800 0 0 1-2.517 2.453 7 7 0 0 1-1.048.625c-.280.132-.581.240-.829.240s-.548-.108-.829-.240a7 7 0 0 1-1.048-.625 11.800 11.800 0 0 1-2.517-2.453C1.928 10.487.545 7.169 1.141 2.692A1.540 1.540 0 0 1 2.185 1.430 63 63 0 0 1 5.072.560"/><path d="M10.854 5.146a.5.5 0 0 1 0 .708l-3 3a.5.5 0 0 1-.708 0l-1.500-1.500a.5.5 0 1 1 .708-.708L7.500 7.793l2.646-2.647a.5.5 0 0 1 .708 0"/></svg>
<span class="t" style="left:77.00px;top:1157.84px;font-size:17.5px;line-height:21.0px;letter-spacing:-1.0px;-webkit-text-stroke:0.25px #c6c9ce;">GDPR</span>
<svg class="i" style="left:257.50px;top:1156.65px;width:22.5px;height:22.5px;" viewBox="0 0 16 16" fill="currentColor"><path fill-rule="evenodd" d="M1.646 4.646a.5.5 0 0 1 .708 0L8 10.293l5.646-5.647a.5.5 0 0 1 .708.708l-6 6a.5.5 0 0 1-.708 0l-6-6a.5.5 0 0 1 0-.708"/></svg>
<svg class="i" style="left:38.75px;top:1210.00px;width:22.5px;height:22.5px;" viewBox="0 0 16 16" fill="currentColor"><path d="M1 2.828c.885-.370 2.154-.769 3.388-.893 1.330-.134 2.458.063 3.112.752v9.746c-.935-.530-2.120-.603-3.213-.493-1.180.120-2.370.461-3.287.811zm7.500-.141c.654-.689 1.782-.886 3.112-.752 1.234.124 2.503.523 3.388.893v9.923c-.918-.350-2.107-.692-3.287-.810-1.094-.111-2.278-.039-3.213.492zM8 1.783C7.015.936 5.587.810 4.287.940c-1.514.153-3.042.672-3.994 1.105A.5.5 0 0 0 0 2.500v11a.5.5 0 0 0 .707.455c.882-.400 2.303-.881 3.680-1.020 1.409-.142 2.590.087 3.223.877a.5.5 0 0 0 .780 0c.633-.790 1.814-1.019 3.222-.877 1.378.139 2.800.620 3.681 1.020A.5.5 0 0 0 16 13.500v-11a.5.5 0 0 0-.293-.455c-.952-.433-2.480-.952-3.994-1.105C10.413.809 8.985.936 8 1.783"/></svg>
<span class="t" style="left:77.00px;top:1211.59px;font-size:17.5px;line-height:21.0px;letter-spacing:0.5px;-webkit-text-stroke:0.25px #c6c9ce;">Glossary</span>
<svg class="i" style="left:257.50px;top:1210.40px;width:22.5px;height:22.5px;" viewBox="0 0 16 16" fill="currentColor"><path fill-rule="evenodd" d="M1.646 4.646a.5.5 0 0 1 .708 0L8 10.293l5.646-5.647a.5.5 0 0 1 .708.708l-6 6a.5.5 0 0 1-.708 0l-6-6a.5.5 0 0 1 0-.708"/></svg>
<svg class="i" style="left:38.75px;top:1263.75px;width:22.5px;height:22.5px;" viewBox="0 0 16 16" fill="currentColor"><path d="M8 1a5 5 0 0 0-5 5v1h1a1 1 0 0 1 1 1v3a1 1 0 0 1-1 1H3a1 1 0 0 1-1-1V6a6 6 0 1 1 12 0v6a2.500 2.500 0 0 1-2.500 2.500H9.366a1 1 0 0 1-.866.500h-1a1 1 0 1 1 0-2h1a1 1 0 0 1 .866.500H11.500A1.500 1.500 0 0 0 13 12h-1a1 1 0 0 1-1-1V8a1 1 0 0 1 1-1h1V6a5 5 0 0 0-5-5"/></svg>
<span class="t" style="left:77.00px;top:1265.34px;font-size:17.5px;line-height:21.0px;letter-spacing:0.611px;-webkit-text-stroke:0.25px #c6c9ce;">HelpCenter</span>
<svg class="i" style="left:257.50px;top:1264.15px;width:22.5px;height:22.5px;" viewBox="0 0 16 16" fill="currentColor"><path fill-rule="evenodd" d="M1.646 4.646a.5.5 0 0 1 .708 0L8 10.293l5.646-5.647a.5.5 0 0 1 .708.708l-6 6a.5.5 0 0 1-.708 0l-6-6a.5.5 0 0 1 0-.708"/></svg>
<svg class="i" style="left:38.75px;top:1317.50px;width:22.5px;height:22.5px;" viewBox="0 0 16 16" fill="currentColor"><path d="M3.500 11.500a3.500 3.500 0 1 1 3.163-5H14L15.500 8 14 9.500l-1-1-1 1-1-1-1 1-1-1-1 1H6.663a3.500 3.500 0 0 1-3.163 2M2.500 9a1 1 0 1 0 0-2 1 1 0 0 0 0 2"/></svg>
<span class="t" style="left:77.00px;top:1319.09px;font-size:17.5px;line-height:21.0px;letter-spacing:0.543px;-webkit-text-stroke:0.25px #c6c9ce;">Licenses</span>
<svg class="i" style="left:257.50px;top:1317.90px;width:22.5px;height:22.5px;" viewBox="0 0 16 16" fill="currentColor"><path fill-rule="evenodd" d="M1.646 4.646a.5.5 0 0 1 .708 0L8 10.293l5.646-5.647a.5.5 0 0 1 .708.708l-6 6a.5.5 0 0 1-.708 0l-6-6a.5.5 0 0 1 0-.708"/></svg>
<svg class="i" style="left:38.75px;top:1371.25px;width:22.5px;height:22.5px;" viewBox="0 0 16 16" fill="currentColor"><path d="M11 1a1 1 0 0 1 1 1v12a1 1 0 0 1-1 1H5a1 1 0 0 1-1-1V2a1 1 0 0 1 1-1zM5 0a2 2 0 0 0-2 2v12a2 2 0 0 0 2 2h6a2 2 0 0 0 2-2V2a2 2 0 0 0-2-2z"/><path d="M8 14a1 1 0 1 0 0-2 1 1 0 0 0 0 2"/></svg>
<span class="t" style="left:77.00px;top:1372.84px;font-size:17.5px;line-height:21.0px;letter-spacing:0.286px;-webkit-text-stroke:0.25px #c6c9ce;">MTN MoMo</span>
<div class="abs" style="left:0;top:1397px;width:324px;height:93px;background:#1e222b;border-top:1px solid #262b35"></div>
<div class="abs" style="left:20px;top:1418.5px;width:283.5px;height:51px;border:1px solid #3a404c;border-radius:10px"></div>
<svg class="i" style="left:114.75px;top:1434.75px;width:17.5px;height:17.5px;color:#c6c9ce;" viewBox="0 0 16 16" fill="currentColor"><path fill-rule="evenodd" d="M11.854 3.646a.5.5 0 0 1 0 .708L8.207 8l3.647 3.646a.5.5 0 0 1-.708.708l-4-4a.5.5 0 0 1 0-.708l4-4a.5.5 0 0 1 .708 0M4.500 1a.5.5 0 0 0-.5.5v13a.5.5 0 0 0 1 0v-13a.5.5 0 0 0-.5-.5"/></svg>
<span class="t" style="left:141.20px;top:1434.62px;font-size:16.25px;line-height:19.5px;color:#c6c9ce;letter-spacing:0.471px;">Collapse</span>
</aside>
<div id="brand"><div class="logo"></div>
<span class="t" style="left:40.80px;top:31.84px;font-size:19.5px;line-height:23.4px;font-weight:700;color:#fff;">L</span>
<span class="t" style="left:87.30px;top:30.12px;font-size:21px;line-height:25.2px;font-weight:700;color:#14161b;letter-spacing:0.567px;">Larapen</span>
</div>
<header id="topbar"></header>
<svg class="i" style="left:368.30px;top:31.70px;width:23px;height:23px;color:#4a4d55;" viewBox="0 0 16 16" fill="currentColor"><path d="M14 2a1 1 0 0 1 1 1v10a1 1 0 0 1-1 1H2a1 1 0 0 1-1-1V3a1 1 0 0 1 1-1zM2 1a2 2 0 0 0-2 2v10a2 2 0 0 0 2 2h12a2 2 0 0 0 2-2V3a2 2 0 0 0-2-2z"/><path d="M3 4a1 1 0 0 1 1-1h2a1 1 0 0 1 1 1v8a1 1 0 0 1-1 1H4a1 1 0 0 1-1-1z"/></svg>
<svg class="i" style="left:2138.00px;top:31.50px;width:23px;height:23px;color:#4a4d55;" viewBox="0 0 16 16" fill="currentColor"><path fill-rule="evenodd" d="M8.636 3.500a.5.5 0 0 0-.5-.5H1.500A1.500 1.500 0 0 0 0 4.500v10A1.500 1.500 0 0 0 1.500 16h10a1.500 1.500 0 0 0 1.500-1.500V7.864a.5.5 0 0 0-1 0V14.500a.5.5 0 0 1-.5.5h-10a.5.5 0 0 1-.5-.5v-10a.5.5 0 0 1 .5-.5h6.636a.5.5 0 0 0 .5-.5"/><path fill-rule="evenodd" d="M16 .5a.5.5 0 0 0-.5-.5h-5a.5.5 0 0 0 0 1h3.793L6.146 9.146a.5.5 0 1 0 .708.708L15 1.707V5.500a.5.5 0 0 0 1 0z"/></svg>
<svg class="i" style="left:2197.80px;top:31.50px;width:23px;height:23px;color:#4a4d55;" viewBox="0 0 16 16" fill="currentColor"><path d="M8 16a2 2 0 0 0 2-2H6a2 2 0 0 0 2 2M8 1.918l-.797.161A4 4 0 0 0 4 6c0 .628-.134 2.197-.459 3.742-.160.767-.376 1.566-.663 2.258h10.244c-.287-.692-.502-1.490-.663-2.258C12.134 8.197 12 6.628 12 6a4 4 0 0 0-3.203-3.920zM14.220 12c.223.447.481.801.780 1H1c.299-.199.557-.553.780-1C2.680 10.200 3 6.880 3 6c0-2.420 1.720-4.440 4.005-4.901a1 1 0 1 1 1.990 0A5 5 0 0 1 13 6c0 .880.320 4.200 1.220 6"/></svg>
<div class="abs" style="left:2198.6px;top:21px;width:33.2px;height:22.8px;border-radius:50%;background:#e8393b"></div>
<span class="t" style="left:2204.10px;top:25.43px;font-size:11.8px;line-height:14.16px;font-weight:700;color:#fff;letter-spacing:0.1px;">99+</span>
<svg class="i" style="left:2269.10px;top:31.50px;width:23px;height:23px;color:#4a4d55;" viewBox="0 0 16 16" fill="currentColor"><path d="M6 .278a.770.770 0 0 1 .080.858 7.200 7.200 0 0 0-.878 3.460c0 4.021 3.278 7.277 7.318 7.277q.792-.001 1.533-.160a.790.790 0 0 1 .810.316.730.730 0 0 1-.031.893A8.350 8.350 0 0 1 8.344 16C3.734 16 0 12.286 0 7.710 0 4.266 2.114 1.312 5.124.060A.750.750 0 0 1 6 .278"/><path d="M10.794 3.148a.217.217 0 0 1 .412 0l.387 1.162c.173.518.579.924 1.097 1.097l1.162.387a.217.217 0 0 1 0 .412l-1.162.387a1.730 1.730 0 0 0-1.097 1.097l-.387 1.162a.217.217 0 0 1-.412 0l-.387-1.162A1.730 1.730 0 0 0 9.310 6.593l-1.162-.387a.217.217 0 0 1 0-.412l1.162-.387a1.730 1.730 0 0 0 1.097-1.097zM13.863.099a.145.145 0 0 1 .274 0l.258.774c.115.346.386.617.732.732l.774.258a.145.145 0 0 1 0 .274l-.774.258a1.160 1.160 0 0 0-.732.732l-.258.774a.145.145 0 0 1-.274 0l-.258-.774a1.160 1.160 0 0 0-.732-.732l-.774-.258a.145.145 0 0 1 0-.274l.774-.258c.346-.115.617-.386.732-.732z"/></svg>
<svg class="i" style="left:2317.90px;top:31.50px;width:23px;height:23px;color:#4a4d55;" viewBox="0 0 16 16" fill="currentColor"><path d="M4.545 6.714 4.110 8H3l1.862-5h1.284L8 8H6.833l-.435-1.286zm1.634-.736L5.500 3.956h-.049l-.679 2.022z"/><path d="M0 2a2 2 0 0 1 2-2h7a2 2 0 0 1 2 2v3h3a2 2 0 0 1 2 2v7a2 2 0 0 1-2 2H7a2 2 0 0 1-2-2v-3H2a2 2 0 0 1-2-2zm2-1a1 1 0 0 0-1 1v7a1 1 0 0 0 1 1h7a1 1 0 0 0 1-1V2a1 1 0 0 0-1-1zm7.138 9.995q.289.451.630.846c-.748.575-1.673 1.001-2.768 1.292.178.217.451.635.555.867 1.125-.359 2.080-.844 2.886-1.494.777.665 1.739 1.165 2.930 1.472.133-.254.414-.673.629-.890-1.125-.253-2.057-.694-2.820-1.284.681-.747 1.222-1.651 1.621-2.757H14V8h-3v1.047h.765c-.318.844-.740 1.546-1.272 2.130a6 6 0 0 1-.415-.492 2 2 0 0 1-.940.310"/></svg>
<div class="abs" style="left:2364.5px;top:13px;width:165.5px;height:61px;border-radius:13px;background:#f3f3f5;border:1px solid #e6e7ea"></div>
<div class="abs" style="left:2373px;top:23.7px;width:40.2px;height:40.2px;border-radius:10px;background:linear-gradient(135deg,#2563eb,#3b82f6)"></div>
<span class="t" style="left:2387.80px;top:34.83px;font-size:15.5px;line-height:18.6px;font-weight:700;color:#fff;">A</span>
<span class="t" style="left:2428.60px;top:22.30px;font-size:16.8px;line-height:20.16px;color:#14161b;letter-spacing:1.35px;-webkit-text-stroke:0.35px #14161b;">Admin</span>
<span class="t" style="left:2428.60px;top:45.10px;font-size:15px;line-height:18.0px;color:#73777f;letter-spacing:0.5px;">admin</span>
<svg class="i" style="left:2497.15px;top:36.85px;width:13.5px;height:13.5px;color:#6b6f78;" viewBox="0 0 16 16" fill="currentColor"><path fill-rule="evenodd" d="M1.646 4.646a.5.5 0 0 1 .708 0L8 10.293l5.646-5.647a.5.5 0 0 1 .708.708l-6 6a.5.5 0 0 1-.708 0l-6-6a.5.5 0 0 1 0-.708"/></svg>
<span class="t" style="left:354.00px;top:129.44px;font-size:17.5px;line-height:21.0px;color:#787c85;letter-spacing:-0.25px;">Dashboard</span>
<span class="t" style="left:448.00px;top:129.44px;font-size:17.5px;line-height:21.0px;color:#c9ccd2;">/</span>
<span class="t" style="left:463.75px;top:129.44px;font-size:17.5px;line-height:21.0px;color:#787c85;letter-spacing:-0.333px;">Job Positions</span>
<span class="t" style="left:355.00px;top:186.60px;font-size:30px;line-height:36.0px;font-weight:700;color:#14161b;letter-spacing:-1.25px;">Job Positions</span>
<span class="t" style="left:354.00px;top:231.34px;font-size:17.5px;line-height:21.0px;color:#787c85;letter-spacing:0.385px;">Manage open positions and job listings</span>
<div class="btn" style="left:1771.5px;top:206px;width:119px;height:48px;background:#f3f3f5;border:1px solid #e6e7ea"></div>
<svg class="i" style="left:1791.85px;top:220.25px;width:17.5px;height:17.5px;color:#55585f;" viewBox="0 0 16 16" fill="currentColor"><path d="M5.500 5.500A.5.5 0 0 1 6 6v6a.5.5 0 0 1-1 0V6a.5.5 0 0 1 .5-.5m2.500 0a.5.5 0 0 1 .5.5v6a.5.5 0 0 1-1 0V6a.5.5 0 0 1 .5-.5m3 .5a.5.5 0 0 0-1 0v6a.5.5 0 0 0 1 0z"/><path d="M14.500 3a1 1 0 0 1-1 1H13v9a2 2 0 0 1-2 2H5a2 2 0 0 1-2-2V4h-.5a1 1 0 0 1-1-1V2a1 1 0 0 1 1-1H6a1 1 0 0 1 1-1h2a1 1 0 0 1 1 1h3.500a1 1 0 0 1 1 1zM4.118 4 4 4.059V13a1 1 0 0 0 1 1h6a1 1 0 0 0 1-1V4.059L11.882 4zM2.500 3h11V2h-11z"/></svg>
<span class="t" style="left:1824.80px;top:219.64px;font-size:17.5px;line-height:21.0px;color:#4a4d55;letter-spacing:0.25px;">Trash</span>
<div class="btn" style="left:1915.7px;top:206px;width:219px;height:48px;background:#fff;box-shadow:inset 0 0 0 1.5px #4a6fdb"></div>
<svg class="i" style="left:1936.45px;top:219.85px;width:17.5px;height:17.5px;color:#3f6fe0;" viewBox="0 0 16 16" fill="currentColor"><path d="M.540 3.870.500 3a2 2 0 0 1 2-2h3.672a2 2 0 0 1 1.414.586l.828.828A2 2 0 0 0 9.828 3h3.982a2 2 0 0 1 1.992 2.181l-.637 7A2 2 0 0 1 13.174 14H2.826a2 2 0 0 1-1.991-1.819l-.637-7a2 2 0 0 1 .342-1.310zM2.190 4a1 1 0 0 0-.996 1.090l.637 7a1 1 0 0 0 .995.910h10.348a1 1 0 0 0 .995-.910l.637-7A1 1 0 0 0 13.810 4zm4.690-1.707A1 1 0 0 0 6.172 2H2.500a1 1 0 0 0-1 .981l.006.139q.323-.119.684-.120h5.396z"/></svg>
<span class="t" style="left:1963.40px;top:219.64px;font-size:17.5px;line-height:21.0px;color:#3f6fe0;letter-spacing:0.412px;-webkit-text-stroke:0.3px #3f6fe0;">Career Categories</span>
<div class="btn" style="left:2160.2px;top:206px;width:173.5px;height:48px;background:#fff;box-shadow:inset 0 0 0 1.5px #45c3dd"></div>
<svg class="i" style="left:2181.15px;top:220.25px;width:17.5px;height:17.5px;color:#2fb8d8;" viewBox="0 0 16 16" fill="currentColor"><path d="M11 8a3 3 0 1 1-6 0 3 3 0 0 1 6 0"/><path d="M14 14V4.500L9.500 0H4a2 2 0 0 0-2 2v12a2 2 0 0 0 2 2h8a2 2 0 0 0 2-2M9.500 3A1.500 1.500 0 0 0 11 4.500h2v9.255S12 12 8 12s-5 1.755-5 1.755V2a1 1 0 0 1 1-1h5.500z"/></svg>
<span class="t" style="left:2209.50px;top:219.64px;font-size:17.5px;line-height:21.0px;color:#2fb8d8;letter-spacing:0.727px;-webkit-text-stroke:0.3px #2fb8d8;">Applications</span>
<div class="btn" style="left:2359px;top:207.2px;width:171px;height:45.6px;background:linear-gradient(100deg,#2563eb,#3b82f6)"></div>
<svg class="i" style="left:2378.55px;top:220.75px;width:17.5px;height:17.5px;color:#fff;" viewBox="0 0 16 16" fill="currentColor"><path fill-rule="evenodd" d="M8 2a.5.5 0 0 1 .5.5v5h5a.5.5 0 0 1 0 1h-5v5a.5.5 0 0 1-1 0v-5h-5a.5.5 0 0 1 0-1h5v-5A.5.5 0 0 1 8 2"/></svg>
<span class="t" style="left:2406.70px;top:219.64px;font-size:17.5px;line-height:21.0px;color:#fff;letter-spacing:0.455px;-webkit-text-stroke:0.3px #fff;">Add Position</span>
<section id="card"></section>
<span class="t" style="left:381.75px;top:300.09px;font-size:25px;line-height:30.0px;color:#14161b;letter-spacing:0.453px;-webkit-text-stroke:0.3px #14161b;">All Job Positions</span>
<div class="sel" style="left:2032.5px;top:295.8px;width:248.5px;height:38px"></div>
<span class="t" style="left:2044.50px;top:304.74px;font-size:17.5px;line-height:21.0px;color:#2b2e35;letter-spacing:0.429px;">All Departments</span>
<svg class="i" style="left:2246.0px;top:308.5px;width:17px;height:13px" viewBox="0 0 16 12" fill="none" stroke="#343a40" stroke-width="2" stroke-linecap="round" stroke-linejoin="round"><path d="m2 3 6 6 6-6"/></svg>
<div class="sel" style="left:2291.2px;top:295.8px;width:212.6px;height:38px"></div>
<span class="t" style="left:2303.30px;top:304.74px;font-size:17.5px;line-height:21.0px;color:#2b2e35;letter-spacing:0.127px;">All Statuses</span>
<svg class="i" style="left:2469.0px;top:308.5px;width:17px;height:13px" viewBox="0 0 16 12" fill="none" stroke="#343a40" stroke-width="2" stroke-linecap="round" stroke-linejoin="round"><path d="m2 3 6 6 6-6"/></svg>
<div class="hr" style="top:354px"></div>
<div class="cb" style="left:376.25px;top:373.75px"></div>
<span class="t" style="left:449.25px;top:377.55px;font-size:14px;line-height:16.8px;color:#6f747c;letter-spacing:0.312px;-webkit-text-stroke:0.5px #6f747c;">JOB TITLE</span>
<span class="t" style="left:938.25px;top:377.55px;font-size:14px;line-height:16.8px;color:#6f747c;letter-spacing:0.143px;-webkit-text-stroke:0.5px #6f747c;">CATEGORY</span>
<span class="t" style="left:1204.00px;top:377.55px;font-size:14px;line-height:16.8px;color:#6f747c;letter-spacing:0.75px;-webkit-text-stroke:0.5px #6f747c;">LOCATION</span>
<span class="t" style="left:1665.75px;top:377.55px;font-size:14px;line-height:16.8px;color:#6f747c;letter-spacing:0.143px;-webkit-text-stroke:0.5px #6f747c;">EMPLOYMENT TYPE</span>
<span class="t" style="left:1988.25px;top:377.55px;font-size:14px;line-height:16.8px;color:#6f747c;letter-spacing:0.341px;-webkit-text-stroke:0.5px #6f747c;">APPLICATIONS</span>
<span class="t" style="left:2251.50px;top:377.55px;font-size:14px;line-height:16.8px;color:#6f747c;letter-spacing:0.1px;-webkit-text-stroke:0.5px #6f747c;">STATUS</span>
<span class="t" style="left:2396.70px;top:377.55px;font-size:14px;line-height:16.8px;color:#6f747c;letter-spacing:0.283px;-webkit-text-stroke:0.5px #6f747c;">ACTIONS</span>
<div class="hr" style="top:411px"></div>
<div class="cb" style="left:376.25px;top:447.50px"></div>
<span class="t" style="left:448.90px;top:431.50px;font-size:18.75px;line-height:22.5px;font-weight:700;color:#101216;letter-spacing:-0.375px;">Senior Full-Stack Developer</span>
<span class="t" style="left:448.90px;top:461.48px;font-size:15.6px;line-height:18.72px;color:#787c85;">Engineering</span>
<span class="t bd b-blue" style="left:938.25px;top:444.25px;width:107.50px;letter-spacing:0.375px">Engineering</span>
<span class="t" style="left:1204.70px;top:446.49px;font-size:17.5px;line-height:21.0px;color:#15171c;letter-spacing:-0.146px;">Paris, France</span>
<span class="t bd b-green" style="left:1312.00px;top:444.25px;width:78.5px;letter-spacing:0.55px">Remote</span>
<span class="t" style="left:1666.50px;top:446.49px;font-size:17.5px;line-height:21.0px;color:#15171c;letter-spacing:0.075px;">Full Time</span>
<span class="t bd b-gray" style="left:1988px;top:444.25px;width:29.5px">1</span>
<span class="t bd b-pub" style="left:2252.2px;top:444.25px;width:94px;letter-spacing:0.575px">Published</span>
<div class="act e" style="left:2396.2px;top:435.75px"></div>
<svg class="i" style="left:2412.45px;top:448.10px;width:16.5px;height:16.5px;color:#3f6fe0;" viewBox="0 0 16 16" fill="currentColor"><path d="M12.146.146a.5.5 0 0 1 .708 0l3 3a.5.5 0 0 1 0 .708l-10 10a.5.5 0 0 1-.168.110l-5 2a.5.5 0 0 1-.650-.650l2-5a.5.5 0 0 1 .110-.168zM11.207 2.500 13.500 4.793 14.793 3.500 12.500 1.207zm1.586 3L10.500 3.207 4 9.707V10h.5a.5.5 0 0 1 .5.5v.5h.5a.5.5 0 0 1 .5.5v.5h.293zm-9.761 5.175-.106.106-1.528 3.821 3.821-1.528.106-.106A.5.5 0 0 1 5 12.500V12h-.5a.5.5 0 0 1-.5-.5V11h-.5a.5.5 0 0 1-.468-.325"/></svg>
<div class="act d" style="left:2455px;top:435.75px"></div>
<svg class="i" style="left:2471.25px;top:447.70px;width:16.5px;height:16.5px;color:#e5575b;" viewBox="0 0 16 16" fill="currentColor"><path d="M5.500 5.500A.5.5 0 0 1 6 6v6a.5.5 0 0 1-1 0V6a.5.5 0 0 1 .5-.5m2.500 0a.5.5 0 0 1 .5.5v6a.5.5 0 0 1-1 0V6a.5.5 0 0 1 .5-.5m3 .5a.5.5 0 0 0-1 0v6a.5.5 0 0 0 1 0z"/><path d="M14.500 3a1 1 0 0 1-1 1H13v9a2 2 0 0 1-2 2H5a2 2 0 0 1-2-2V4h-.5a1 1 0 0 1-1-1V2a1 1 0 0 1 1-1H6a1 1 0 0 1 1-1h2a1 1 0 0 1 1 1h3.500a1 1 0 0 1 1 1zM4.118 4 4 4.059V13a1 1 0 0 0 1 1h6a1 1 0 0 0 1-1V4.059L11.882 4zM2.500 3h11V2h-11z"/></svg>
<div class="hr" style="top:499.75px"></div>
<div class="cb" style="left:376.25px;top:536.25px"></div>
<span class="t" style="left:448.90px;top:520.25px;font-size:18.75px;line-height:22.5px;font-weight:700;color:#101216;letter-spacing:-0.696px;">DevOps Engineer</span>
<span class="t" style="left:448.90px;top:550.23px;font-size:15.6px;line-height:18.72px;color:#787c85;">Engineering</span>
<span class="t bd b-blue" style="left:938.25px;top:533.00px;width:107.50px;letter-spacing:0.375px">Engineering</span>
<span class="t" style="left:1204.70px;top:535.24px;font-size:17.5px;line-height:21.0px;color:#15171c;">Lyon, France</span>
<span class="t" style="left:1666.50px;top:535.24px;font-size:17.5px;line-height:21.0px;color:#15171c;letter-spacing:0.075px;">Full Time</span>
<span class="t bd b-gray" style="left:1988px;top:533.00px;width:29.5px">1</span>
<span class="t bd b-pub" style="left:2252.2px;top:533.00px;width:94px;letter-spacing:0.575px">Published</span>
<div class="act e" style="left:2396.2px;top:524.50px"></div>
<svg class="i" style="left:2412.45px;top:536.85px;width:16.5px;height:16.5px;color:#3f6fe0;" viewBox="0 0 16 16" fill="currentColor"><path d="M12.146.146a.5.5 0 0 1 .708 0l3 3a.5.5 0 0 1 0 .708l-10 10a.5.5 0 0 1-.168.110l-5 2a.5.5 0 0 1-.650-.650l2-5a.5.5 0 0 1 .110-.168zM11.207 2.500 13.500 4.793 14.793 3.500 12.500 1.207zm1.586 3L10.500 3.207 4 9.707V10h.5a.5.5 0 0 1 .5.5v.5h.5a.5.5 0 0 1 .5.5v.5h.293zm-9.761 5.175-.106.106-1.528 3.821 3.821-1.528.106-.106A.5.5 0 0 1 5 12.500V12h-.5a.5.5 0 0 1-.5-.5V11h-.5a.5.5 0 0 1-.468-.325"/></svg>
<div class="act d" style="left:2455px;top:524.50px"></div>
<svg class="i" style="left:2471.25px;top:536.45px;width:16.5px;height:16.5px;color:#e5575b;" viewBox="0 0 16 16" fill="currentColor"><path d="M5.500 5.500A.5.5 0 0 1 6 6v6a.5.5 0 0 1-1 0V6a.5.5 0 0 1 .5-.5m2.500 0a.5.5 0 0 1 .5.5v6a.5.5 0 0 1-1 0V6a.5.5 0 0 1 .5-.5m3 .5a.5.5 0 0 0-1 0v6a.5.5 0 0 0 1 0z"/><path d="M14.500 3a1 1 0 0 1-1 1H13v9a2 2 0 0 1-2 2H5a2 2 0 0 1-2-2V4h-.5a1 1 0 0 1-1-1V2a1 1 0 0 1 1-1H6a1 1 0 0 1 1-1h2a1 1 0 0 1 1 1h3.500a1 1 0 0 1 1 1zM4.118 4 4 4.059V13a1 1 0 0 0 1 1h6a1 1 0 0 0 1-1V4.059L11.882 4zM2.500 3h11V2h-11z"/></svg>
<div class="hr" style="top:588.50px"></div>
<div class="cb" style="left:376.25px;top:625.00px"></div>
<span class="t" style="left:449.90px;top:609.00px;font-size:18.75px;line-height:22.5px;font-weight:700;color:#101216;letter-spacing:-0.562px;">Junior Frontend Developer</span>
<span class="t" style="left:448.90px;top:638.98px;font-size:15.6px;line-height:18.72px;color:#787c85;">Engineering</span>
<span class="t bd b-blue" style="left:938.25px;top:621.75px;width:107.50px;letter-spacing:0.375px">Engineering</span>
<span class="t" style="left:1204.70px;top:623.99px;font-size:17.5px;line-height:21.0px;color:#15171c;letter-spacing:-0.146px;">Paris, France</span>
<span class="t" style="left:1666.50px;top:623.99px;font-size:17.5px;line-height:21.0px;color:#15171c;letter-spacing:0.075px;">Full Time</span>
<span class="t bd b-gray" style="left:1988px;top:621.75px;width:33.75px">3</span>
<span class="t bd b-pub" style="left:2252.2px;top:621.75px;width:94px;letter-spacing:0.575px">Published</span>
<div class="act e" style="left:2396.2px;top:613.25px"></div>
<svg class="i" style="left:2412.45px;top:625.60px;width:16.5px;height:16.5px;color:#3f6fe0;" viewBox="0 0 16 16" fill="currentColor"><path d="M12.146.146a.5.5 0 0 1 .708 0l3 3a.5.5 0 0 1 0 .708l-10 10a.5.5 0 0 1-.168.110l-5 2a.5.5 0 0 1-.650-.650l2-5a.5.5 0 0 1 .110-.168zM11.207 2.500 13.500 4.793 14.793 3.500 12.500 1.207zm1.586 3L10.500 3.207 4 9.707V10h.5a.5.5 0 0 1 .5.5v.5h.5a.5.5 0 0 1 .5.5v.5h.293zm-9.761 5.175-.106.106-1.528 3.821 3.821-1.528.106-.106A.5.5 0 0 1 5 12.500V12h-.5a.5.5 0 0 1-.5-.5V11h-.5a.5.5 0 0 1-.468-.325"/></svg>
<div class="act d" style="left:2455px;top:613.25px"></div>
<svg class="i" style="left:2471.25px;top:625.20px;width:16.5px;height:16.5px;color:#e5575b;" viewBox="0 0 16 16" fill="currentColor"><path d="M5.500 5.500A.5.5 0 0 1 6 6v6a.5.5 0 0 1-1 0V6a.5.5 0 0 1 .5-.5m2.500 0a.5.5 0 0 1 .5.5v6a.5.5 0 0 1-1 0V6a.5.5 0 0 1 .5-.5m3 .5a.5.5 0 0 0-1 0v6a.5.5 0 0 0 1 0z"/><path d="M14.500 3a1 1 0 0 1-1 1H13v9a2 2 0 0 1-2 2H5a2 2 0 0 1-2-2V4h-.5a1 1 0 0 1-1-1V2a1 1 0 0 1 1-1H6a1 1 0 0 1 1-1h2a1 1 0 0 1 1 1h3.500a1 1 0 0 1 1 1zM4.118 4 4 4.059V13a1 1 0 0 0 1 1h6a1 1 0 0 0 1-1V4.059L11.882 4zM2.500 3h11V2h-11z"/></svg>
<div class="hr" style="top:677.25px"></div>
<div class="cb" style="left:376.25px;top:713.75px"></div>
<span class="t" style="left:448.90px;top:697.75px;font-size:18.75px;line-height:22.5px;font-weight:700;color:#101216;letter-spacing:-0.45px;">Product Designer</span>
<span class="t" style="left:448.90px;top:727.73px;font-size:15.6px;line-height:18.72px;color:#787c85;">Design</span>
<span class="t bd b-blue" style="left:938.25px;top:710.50px;width:72.00px;letter-spacing:0.45px">Design</span>
<span class="t" style="left:1204.70px;top:712.74px;font-size:17.5px;line-height:21.0px;color:#15171c;letter-spacing:-0.146px;">Paris, France</span>
<span class="t bd b-green" style="left:1312.00px;top:710.50px;width:78.5px;letter-spacing:0.55px">Remote</span>
<span class="t" style="left:1666.50px;top:712.74px;font-size:17.5px;line-height:21.0px;color:#15171c;letter-spacing:0.075px;">Full Time</span>
<span class="t bd b-gray" style="left:1988px;top:710.50px;width:33.75px">5</span>
<span class="t bd b-pub" style="left:2252.2px;top:710.50px;width:94px;letter-spacing:0.575px">Published</span>
<div class="act e" style="left:2396.2px;top:702.00px"></div>
<svg class="i" style="left:2412.45px;top:714.35px;width:16.5px;height:16.5px;color:#3f6fe0;" viewBox="0 0 16 16" fill="currentColor"><path d="M12.146.146a.5.5 0 0 1 .708 0l3 3a.5.5 0 0 1 0 .708l-10 10a.5.5 0 0 1-.168.110l-5 2a.5.5 0 0 1-.650-.650l2-5a.5.5 0 0 1 .110-.168zM11.207 2.500 13.500 4.793 14.793 3.500 12.500 1.207zm1.586 3L10.500 3.207 4 9.707V10h.5a.5.5 0 0 1 .5.5v.5h.5a.5.5 0 0 1 .5.5v.5h.293zm-9.761 5.175-.106.106-1.528 3.821 3.821-1.528.106-.106A.5.5 0 0 1 5 12.500V12h-.5a.5.5 0 0 1-.5-.5V11h-.5a.5.5 0 0 1-.468-.325"/></svg>
<div class="act d" style="left:2455px;top:702.00px"></div>
<svg class="i" style="left:2471.25px;top:713.95px;width:16.5px;height:16.5px;color:#e5575b;" viewBox="0 0 16 16" fill="currentColor"><path d="M5.500 5.500A.5.5 0 0 1 6 6v6a.5.5 0 0 1-1 0V6a.5.5 0 0 1 .5-.5m2.500 0a.5.5 0 0 1 .5.5v6a.5.5 0 0 1-1 0V6a.5.5 0 0 1 .5-.5m3 .5a.5.5 0 0 0-1 0v6a.5.5 0 0 0 1 0z"/><path d="M14.500 3a1 1 0 0 1-1 1H13v9a2 2 0 0 1-2 2H5a2 2 0 0 1-2-2V4h-.5a1 1 0 0 1-1-1V2a1 1 0 0 1 1-1H6a1 1 0 0 1 1-1h2a1 1 0 0 1 1 1h3.500a1 1 0 0 1 1 1zM4.118 4 4 4.059V13a1 1 0 0 0 1 1h6a1 1 0 0 0 1-1V4.059L11.882 4zM2.500 3h11V2h-11z"/></svg>
<div class="hr" style="top:766.00px"></div>
<div class="cb" style="left:376.25px;top:802.50px"></div>
<span class="t" style="left:448.90px;top:786.50px;font-size:18.75px;line-height:22.5px;font-weight:700;color:#101216;letter-spacing:-0.348px;">UX Researcher (Contract)</span>
<span class="t" style="left:448.90px;top:816.48px;font-size:15.6px;line-height:18.72px;color:#787c85;">Design</span>
<span class="t bd b-blue" style="left:938.25px;top:799.25px;width:72.00px;letter-spacing:0.45px">Design</span>
<span class="t" style="left:1205.50px;top:801.49px;font-size:17.5px;line-height:21.0px;color:#15171c;transform:scaleX(.79);transform-origin:0 50%;">—</span>
<span class="t bd b-green" style="left:1224.50px;top:799.25px;width:78.5px;letter-spacing:0.55px">Remote</span>
<span class="t" style="left:1666.50px;top:801.49px;font-size:17.5px;line-height:21.0px;color:#15171c;letter-spacing:0.857px;">Contract</span>
<span class="t bd b-gray" style="left:1988px;top:799.25px;width:33.75px">4</span>
<span class="t bd b-pub" style="left:2252.2px;top:799.25px;width:94px;letter-spacing:0.575px">Published</span>
<div class="act e" style="left:2396.2px;top:790.75px"></div>
<svg class="i" style="left:2412.45px;top:803.10px;width:16.5px;height:16.5px;color:#3f6fe0;" viewBox="0 0 16 16" fill="currentColor"><path d="M12.146.146a.5.5 0 0 1 .708 0l3 3a.5.5 0 0 1 0 .708l-10 10a.5.5 0 0 1-.168.110l-5 2a.5.5 0 0 1-.650-.650l2-5a.5.5 0 0 1 .110-.168zM11.207 2.500 13.500 4.793 14.793 3.500 12.500 1.207zm1.586 3L10.500 3.207 4 9.707V10h.5a.5.5 0 0 1 .5.5v.5h.5a.5.5 0 0 1 .5.5v.5h.293zm-9.761 5.175-.106.106-1.528 3.821 3.821-1.528.106-.106A.5.5 0 0 1 5 12.500V12h-.5a.5.5 0 0 1-.5-.5V11h-.5a.5.5 0 0 1-.468-.325"/></svg>
<div class="act d" style="left:2455px;top:790.75px"></div>
<svg class="i" style="left:2471.25px;top:802.70px;width:16.5px;height:16.5px;color:#e5575b;" viewBox="0 0 16 16" fill="currentColor"><path d="M5.500 5.500A.5.5 0 0 1 6 6v6a.5.5 0 0 1-1 0V6a.5.5 0 0 1 .5-.5m2.500 0a.5.5 0 0 1 .5.5v6a.5.5 0 0 1-1 0V6a.5.5 0 0 1 .5-.5m3 .5a.5.5 0 0 0-1 0v6a.5.5 0 0 0 1 0z"/><path d="M14.500 3a1 1 0 0 1-1 1H13v9a2 2 0 0 1-2 2H5a2 2 0 0 1-2-2V4h-.5a1 1 0 0 1-1-1V2a1 1 0 0 1 1-1H6a1 1 0 0 1 1-1h2a1 1 0 0 1 1 1h3.500a1 1 0 0 1 1 1zM4.118 4 4 4.059V13a1 1 0 0 0 1 1h6a1 1 0 0 0 1-1V4.059L11.882 4zM2.500 3h11V2h-11z"/></svg>
<div class="hr" style="top:854.75px"></div>
<div class="cb" style="left:376.25px;top:891.25px"></div>
<span class="t" style="left:448.90px;top:875.25px;font-size:18.75px;line-height:22.5px;font-weight:700;color:#101216;letter-spacing:-0.302px;">Content Marketing Manager</span>
<span class="t" style="left:448.90px;top:905.23px;font-size:15.6px;line-height:18.72px;color:#787c85;letter-spacing:0.219px;">Marketing</span>
<span class="t bd b-blue" style="left:938.25px;top:888.00px;width:94.00px;letter-spacing:0.656px">Marketing</span>
<span class="t" style="left:1204.70px;top:890.24px;font-size:17.5px;line-height:21.0px;color:#15171c;letter-spacing:0.017px;">Bordeaux, France</span>
<span class="t bd b-green" style="left:1349.00px;top:888.00px;width:78.5px;letter-spacing:0.55px">Remote</span>
<span class="t" style="left:1666.50px;top:890.24px;font-size:17.5px;line-height:21.0px;color:#15171c;letter-spacing:0.075px;">Full Time</span>
<span class="t bd b-gray" style="left:1988px;top:888.00px;width:33.75px">2</span>
<span class="t bd b-pub" style="left:2252.2px;top:888.00px;width:94px;letter-spacing:0.575px">Published</span>
<div class="act e" style="left:2396.2px;top:879.50px"></div>
<svg class="i" style="left:2412.45px;top:891.85px;width:16.5px;height:16.5px;color:#3f6fe0;" viewBox="0 0 16 16" fill="currentColor"><path d="M12.146.146a.5.5 0 0 1 .708 0l3 3a.5.5 0 0 1 0 .708l-10 10a.5.5 0 0 1-.168.110l-5 2a.5.5 0 0 1-.650-.650l2-5a.5.5 0 0 1 .110-.168zM11.207 2.500 13.500 4.793 14.793 3.500 12.500 1.207zm1.586 3L10.500 3.207 4 9.707V10h.5a.5.5 0 0 1 .5.5v.5h.5a.5.5 0 0 1 .5.5v.5h.293zm-9.761 5.175-.106.106-1.528 3.821 3.821-1.528.106-.106A.5.5 0 0 1 5 12.500V12h-.5a.5.5 0 0 1-.5-.5V11h-.5a.5.5 0 0 1-.468-.325"/></svg>
<div class="act d" style="left:2455px;top:879.50px"></div>
<svg class="i" style="left:2471.25px;top:891.45px;width:16.5px;height:16.5px;color:#e5575b;" viewBox="0 0 16 16" fill="currentColor"><path d="M5.500 5.500A.5.5 0 0 1 6 6v6a.5.5 0 0 1-1 0V6a.5.5 0 0 1 .5-.5m2.500 0a.5.5 0 0 1 .5.5v6a.5.5 0 0 1-1 0V6a.5.5 0 0 1 .5-.5m3 .5a.5.5 0 0 0-1 0v6a.5.5 0 0 0 1 0z"/><path d="M14.500 3a1 1 0 0 1-1 1H13v9a2 2 0 0 1-2 2H5a2 2 0 0 1-2-2V4h-.5a1 1 0 0 1-1-1V2a1 1 0 0 1 1-1H6a1 1 0 0 1 1-1h2a1 1 0 0 1 1 1h3.500a1 1 0 0 1 1 1zM4.118 4 4 4.059V13a1 1 0 0 0 1 1h6a1 1 0 0 0 1-1V4.059L11.882 4zM2.500 3h11V2h-11z"/></svg>
<div class="hr" style="top:943.50px"></div>
<div class="cb" style="left:376.25px;top:980.00px"></div>
<span class="t" style="left:448.90px;top:964.00px;font-size:18.75px;line-height:22.5px;font-weight:700;color:#101216;letter-spacing:-0.347px;">Social Media Intern</span>
<span class="t" style="left:448.90px;top:993.98px;font-size:15.6px;line-height:18.72px;color:#787c85;letter-spacing:0.219px;">Marketing</span>
<span class="t bd b-blue" style="left:938.25px;top:976.75px;width:94.00px;letter-spacing:0.656px">Marketing</span>
<span class="t" style="left:1204.70px;top:978.99px;font-size:17.5px;line-height:21.0px;color:#15171c;letter-spacing:-0.146px;">Paris, France</span>
<span class="t" style="left:1666.50px;top:978.99px;font-size:17.5px;line-height:21.0px;color:#15171c;letter-spacing:0.556px;">Internship</span>
<span class="t bd b-gray" style="left:1988px;top:976.75px;width:33.75px">2</span>
<span class="t bd b-pub" style="left:2252.2px;top:976.75px;width:94px;letter-spacing:0.575px">Published</span>
<div class="act e" style="left:2396.2px;top:968.25px"></div>
<svg class="i" style="left:2412.45px;top:980.60px;width:16.5px;height:16.5px;color:#3f6fe0;" viewBox="0 0 16 16" fill="currentColor"><path d="M12.146.146a.5.5 0 0 1 .708 0l3 3a.5.5 0 0 1 0 .708l-10 10a.5.5 0 0 1-.168.110l-5 2a.5.5 0 0 1-.650-.650l2-5a.5.5 0 0 1 .110-.168zM11.207 2.500 13.500 4.793 14.793 3.500 12.500 1.207zm1.586 3L10.500 3.207 4 9.707V10h.5a.5.5 0 0 1 .5.5v.5h.5a.5.5 0 0 1 .5.5v.5h.293zm-9.761 5.175-.106.106-1.528 3.821 3.821-1.528.106-.106A.5.5 0 0 1 5 12.500V12h-.5a.5.5 0 0 1-.5-.5V11h-.5a.5.5 0 0 1-.468-.325"/></svg>
<div class="act d" style="left:2455px;top:968.25px"></div>
<svg class="i" style="left:2471.25px;top:980.20px;width:16.5px;height:16.5px;color:#e5575b;" viewBox="0 0 16 16" fill="currentColor"><path d="M5.500 5.500A.5.5 0 0 1 6 6v6a.5.5 0 0 1-1 0V6a.5.5 0 0 1 .5-.5m2.500 0a.5.5 0 0 1 .5.5v6a.5.5 0 0 1-1 0V6a.5.5 0 0 1 .5-.5m3 .5a.5.5 0 0 0-1 0v6a.5.5 0 0 0 1 0z"/><path d="M14.500 3a1 1 0 0 1-1 1H13v9a2 2 0 0 1-2 2H5a2 2 0 0 1-2-2V4h-.5a1 1 0 0 1-1-1V2a1 1 0 0 1 1-1H6a1 1 0 0 1 1-1h2a1 1 0 0 1 1 1h3.500a1 1 0 0 1 1 1zM4.118 4 4 4.059V13a1 1 0 0 0 1 1h6a1 1 0 0 0 1-1V4.059L11.882 4zM2.500 3h11V2h-11z"/></svg>
<div class="hr" style="top:1032.25px"></div>
<div class="cb" style="left:376.25px;top:1068.75px"></div>
<span class="t" style="left:448.90px;top:1052.75px;font-size:18.75px;line-height:22.5px;font-weight:700;color:#101216;letter-spacing:-0.537px;">Customer Success Lead</span>
<span class="t" style="left:449.90px;top:1082.73px;font-size:15.6px;line-height:18.72px;color:#787c85;letter-spacing:0.25px;">Operations</span>
<span class="t bd b-blue" style="left:938.25px;top:1065.50px;width:103.25px;letter-spacing:0.611px">Operations</span>
<span class="t" style="left:1204.70px;top:1067.74px;font-size:17.5px;line-height:21.0px;color:#15171c;letter-spacing:-0.146px;">Paris, France</span>
<span class="t" style="left:1666.50px;top:1067.74px;font-size:17.5px;line-height:21.0px;color:#15171c;letter-spacing:0.075px;">Full Time</span>
<span class="t bd b-gray" style="left:1988px;top:1065.50px;width:33.75px">3</span>
<span class="t bd b-pub" style="left:2252.2px;top:1065.50px;width:94px;letter-spacing:0.575px">Published</span>
<div class="act e" style="left:2396.2px;top:1057.00px"></div>
<svg class="i" style="left:2412.45px;top:1069.35px;width:16.5px;height:16.5px;color:#3f6fe0;" viewBox="0 0 16 16" fill="currentColor"><path d="M12.146.146a.5.5 0 0 1 .708 0l3 3a.5.5 0 0 1 0 .708l-10 10a.5.5 0 0 1-.168.110l-5 2a.5.5 0 0 1-.650-.650l2-5a.5.5 0 0 1 .110-.168zM11.207 2.500 13.500 4.793 14.793 3.500 12.500 1.207zm1.586 3L10.500 3.207 4 9.707V10h.5a.5.5 0 0 1 .5.5v.5h.5a.5.5 0 0 1 .5.5v.5h.293zm-9.761 5.175-.106.106-1.528 3.821 3.821-1.528.106-.106A.5.5 0 0 1 5 12.500V12h-.5a.5.5 0 0 1-.5-.5V11h-.5a.5.5 0 0 1-.468-.325"/></svg>
<div class="act d" style="left:2455px;top:1057.00px"></div>
<svg class="i" style="left:2471.25px;top:1068.95px;width:16.5px;height:16.5px;color:#e5575b;" viewBox="0 0 16 16" fill="currentColor"><path d="M5.500 5.500A.5.5 0 0 1 6 6v6a.5.5 0 0 1-1 0V6a.5.5 0 0 1 .5-.5m2.500 0a.5.5 0 0 1 .5.5v6a.5.5 0 0 1-1 0V6a.5.5 0 0 1 .5-.5m3 .5a.5.5 0 0 0-1 0v6a.5.5 0 0 0 1 0z"/><path d="M14.500 3a1 1 0 0 1-1 1H13v9a2 2 0 0 1-2 2H5a2 2 0 0 1-2-2V4h-.5a1 1 0 0 1-1-1V2a1 1 0 0 1 1-1H6a1 1 0 0 1 1-1h2a1 1 0 0 1 1 1h3.500a1 1 0 0 1 1 1zM4.118 4 4 4.059V13a1 1 0 0 0 1 1h6a1 1 0 0 0 1-1V4.059L11.882 4zM2.500 3h11V2h-11z"/></svg>
<div class="hr" style="top:1121.00px"></div>
<span class="t" style="left:380.70px;top:1153.41px;font-size:17px;line-height:20.4px;color:#787c85;letter-spacing:-0.154px;">Showing 1 to 8 of 8 entries</span>
<div class="sel" style="left:2354px;top:1143.2px;width:149.6px;height:40.2px;border-radius:10px"></div>
<span class="t" style="left:2369.00px;top:1152.84px;font-size:17.5px;line-height:21.0px;color:#2b2e35;letter-spacing:-0.6px;">15 per page</span>
<svg class="i" style="left:2468.8px;top:1157.0px;width:17px;height:13px" viewBox="0 0 16 12" fill="none" stroke="#343a40" stroke-width="2" stroke-linecap="round" stroke-linejoin="round"><path d="m2 3 6 6 6-6"/></svg>
<footer id="footer"></footer>
<span class="t" style="left:355.50px;top:1447.91px;font-size:17px;line-height:20.4px;color:#787c85;letter-spacing:-0.05px;">© 2026 Larapen. All rights reserved.</span>
<span class="t" style="right:30.5px;top:1447.91px;font-size:17px;line-height:20.4px;color:#868a92;letter-spacing:-0.446px">Powered by <span style="color:#5b5f67">Larapen</span> v1.0.2</span>
</div></body></html>
